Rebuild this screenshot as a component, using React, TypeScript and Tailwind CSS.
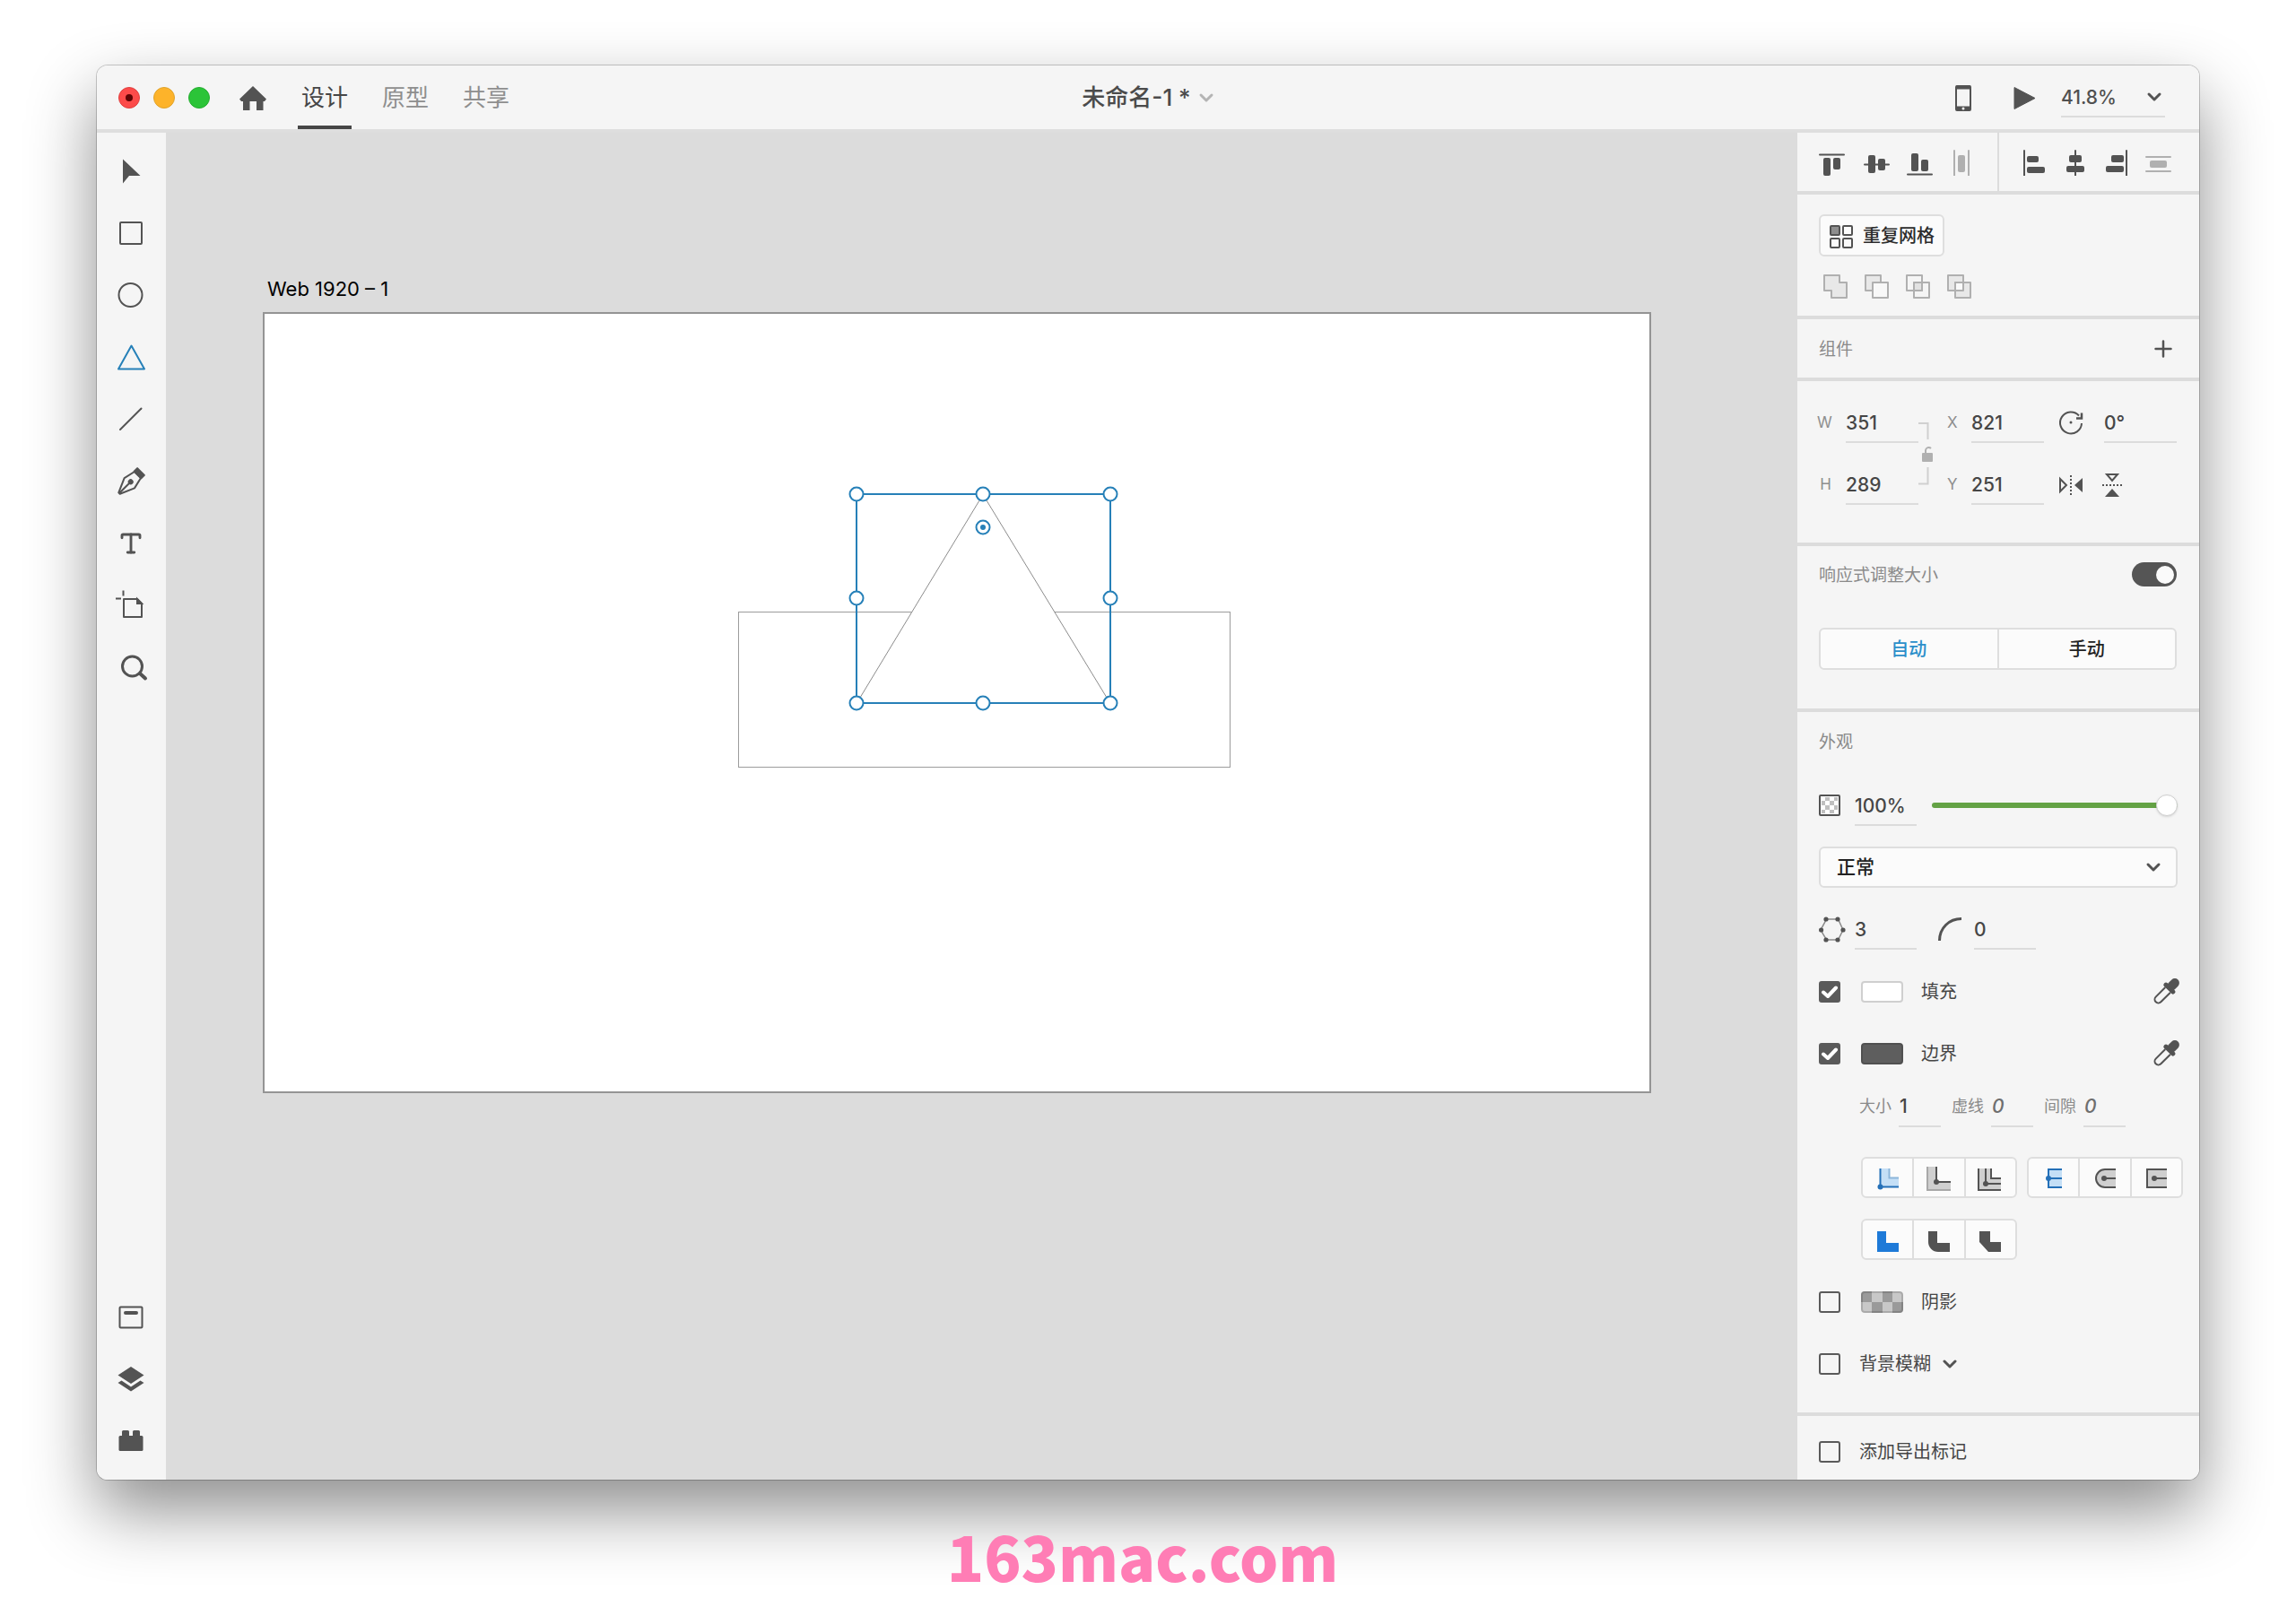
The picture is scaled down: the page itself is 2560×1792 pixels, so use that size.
import React from 'react';
import { Type } from 'lucide-react';

const DARK = '#535353';
const LIGHT = '#b0b0b0';
const BLUE = '#2680b8';

interface GlyphProps {
  size?: number;
  children: React.ReactNode;
}

// All glyphs are drawn around a 0,0 centre
const Glyph: React.FC<GlyphProps> = ({ size = 40, children }) => (
  <svg
    width={size}
    height={size}
    viewBox={`${-size / 2} ${-size / 2} ${size} ${size}`}
    fill="none"
    stroke={DARK}
    strokeWidth="2"
    className="shrink-0"
    aria-hidden="true"
  >
    {children}
  </svg>
);

const Chevron: React.FC<{ color?: string }> = ({ color = DARK }) => (
  <svg width="18" height="12" viewBox="0 0 18 12" fill="none" stroke={color} strokeWidth="3" strokeLinecap="round" strokeLinejoin="round" className="shrink-0" aria-hidden="true">
    <path d="M3 3l6 6 6-6" />
  </svg>
);

const Eyedropper = () => (
  <Glyph size={32}>
    <g transform="rotate(45)">
      <path d="M-4-3V12a4 4 0 0 0 8 0V-3" />
      <rect x="-4" y="-18" width="8" height="13" rx="4" fill={DARK} />
      <rect x="-7" y="-7" width="14" height="3" rx="1" fill={DARK} />
    </g>
  </Glyph>
);

const tools = [
  { name: '选择', icon: <path d="M-9-13.500V13.500L-2 5H10.500Z" fill={DARK} stroke="none" /> },
  { name: '矩形', icon: <rect x="-12" y="-12" width="24" height="24" rx="1" /> },
  { name: '椭圆', icon: <circle cx="-0.500" cy="0" r="13" /> },
  { name: '多边形', icon: <path d="M.5-12.500L15 13.500H-14Z" stroke={BLUE} strokeLinejoin="round" /> },
  { name: '直线', icon: <path d="M-12 12L11.500-11.500" strokeLinecap="round" /> },
  {
    name: '钢笔',
    icon: (
      <g transform="translate(-1 2) rotate(45)" strokeLinejoin="round">
        <rect x="-5.500" y="-17" width="11" height="5" fill={DARK} />
        <path d="M-5-12L-8 1L-1 17H1L8 1L5-12Z" />
        <circle cx="0" cy="-1" r="2" fill={DARK} />
        <path d="M0 0V17" />
      </g>
    ),
  },
  { name: '文本', icon: <Type x={-15} y={-14} size={30} color={DARK} strokeWidth={2.3} /> },
  {
    name: '画板',
    icon: (
      <>
        <path d="M-8-6H7L12-1V14H-8Z" strokeLinejoin="round" />
        <path d="M7-6V-1H12Z" fill={DARK} />
        <path d="M-8.500-15.500V-9.500M-17-6.500H-11" />
      </>
    ),
  },
  {
    name: '缩放',
    icon: (
      <>
        <circle cx="1.500" cy="0" r="11" strokeWidth="3" />
        <path d="M10 8L16 13.500" strokeWidth="4" strokeLinecap="round" />
      </>
    ),
  },
];

const panels = [
  {
    name: '库',
    icon: (
      <>
        <rect x="-12.500" y="-11.500" width="25" height="23" rx="1" />
        <path d="M-6-5H6" strokeWidth="4" strokeLinecap="round" />
      </>
    ),
  },
  {
    name: '图层',
    icon: (
      <g fill={DARK} stroke="none">
        <path d="M0-14L14.500-4.500L0 5L-14.500-4.500Z" />
        <path d="M-14.500 4L-10.500 1.500L0 8.500L10.500 1.500L14.500 4L0 13.500Z" />
      </g>
    ),
  },
  {
    name: '插件',
    icon: (
      <g fill={DARK} stroke="none">
        <rect x="-13.500" y="-6" width="27" height="17" rx="1.500" />
        <rect x="-10" y="-12" width="8" height="10" rx="1.500" />
        <rect x="2" y="-12" width="8" height="10" rx="1.500" />
      </g>
    ),
  },
];

const verticalAlign = [
  { name: '顶对齐', d: 'M-14-8.500H13', bars: [[-10, -5, 8, 20], [1, -5, 8, 13]] },
  { name: '垂直居中', d: 'M-13 2.500H14', bars: [[-9, -8, 8, 20], [2, -4, 8, 13]] },
  { name: '底对齐', d: 'M-14 13.500H13', bars: [[-10, -10, 8, 20], [1, -3, 8, 13]] },
  { name: '水平分布', off: true, d: 'M-11-13V15M5-13V15', bars: [[-7, -8, 8, 19]] },
];

const horizontalAlign = [
  { name: '左对齐', d: 'M-11-13V15', bars: [[-8, -7, 13, 7], [-8, 5, 20, 7]] },
  { name: '水平居中', d: 'M0-13V15', bars: [[-7, -8, 14, 8], [-10, 4, 20, 7]] },
  { name: '右对齐', d: 'M11-13V15', bars: [[-6, -8, 14, 8], [-12, 4, 20, 7]] },
  { name: '垂直分布', off: true, d: 'M-13-6H14M-13 10H14', bars: [[-9, -2, 19, 8]] },
];

const AlignButtons: React.FC<{ items: typeof verticalAlign; className: string }> = ({ items, className }) => (
  <div className={`flex flex-1 items-center pl-6 ${className}`}>
    {items.map((item) => (
      <button key={item.name} aria-label={item.name}>
        <Glyph size={30}>
          <g stroke={item.off ? LIGHT : DARK}>
            <path d={item.d} strokeLinecap="round" />
            {item.bars.map(([x, y, w, h]) => (
              <rect key={`${x},${y}`} x={x} y={y} width={w} height={h} rx="2" fill={item.off ? LIGHT : DARK} stroke="none" />
            ))}
          </g>
        </Glyph>
      </button>
    ))}
  </div>
);

const booleans = [
  { name: '添加', icon: <path d="M-12-12H5V-4H13V13H-4V5H-12Z" fill="#e8e8e8" /> },
  {
    name: '减去',
    icon: (
      <>
        <path d="M-12-12H5V5H-12Z" fill="#e8e8e8" />
        <path d="M-4-4H13V13H-4Z" fill="#f8f8f8" />
      </>
    ),
  },
  {
    name: '交叉',
    icon: (
      <>
        <path d="M-12-12H5V5H-12ZM-4-4H13V13H-4Z" />
        <path d="M-4-4H5V5H-4Z" fill="#e2e2e2" />
      </>
    ),
  },
  {
    name: '排除重叠',
    icon: (
      <>
        <path d="M-12-12H5V5H-12Z" fill="#e8e8e8" />
        <path d="M-4-4H13V13H-4Z" fill="#e8e8e8" />
        <path d="M-4-4H5V5H-4Z" fill="#fafafa" />
      </>
    ),
  },
];

const strokeAlign = [
  {
    name: '内部描边',
    icon: (
      <>
        <path d="M-9-10H1.500V.5H12V11H-9Z" fill="#c4dff6" stroke="none" />
        <path d="M1.500-10V.5H12" stroke="#8cb6da" />
        <path d="M-8.500-10V10.500H12" stroke="#2470b8" />
        <circle cx="-8.500" cy="10.500" r="3" fill="#2470b8" stroke="none" />
      </>
    ),
  },
  {
    name: '外部描边',
    icon: (
      <>
        <path d="M-13-12H-3V5H13V14H-13Z" fill="#cfcfcf" stroke="none" />
        <path d="M-13-12V14H13" stroke="#a8a8a8" />
        <path d="M-3-12V5H13" />
        <circle cx="-3" cy="5" r="3" fill={DARK} stroke="none" />
      </>
    ),
  },
  {
    name: '中心描边',
    icon: (
      <>
        <path d="M-13-10H1V1H12V14H-13Z" fill="#cfcfcf" stroke="none" />
        <path d="M-13-10V14H12M-5-10V7H12M1-10V1H12" />
        <circle cx="-5" cy="7" r="3" fill={DARK} stroke="none" />
      </>
    ),
  },
];

const strokeCaps = [
  {
    name: '对接端头',
    icon: (
      <>
        <path d="M9-9H-6V11H9" fill="#c4dff6" stroke="#2470b8" />
        <path d="M-6 1H9" stroke="#2470b8" />
        <circle cx="-6" cy="1" r="3" fill="#2470b8" stroke="none" />
      </>
    ),
  },
  {
    name: '圆头端头',
    icon: (
      <>
        <path d="M12-9H0A10 10 0 0 0 0 11H12" fill="#cfcfcf" />
        <path d="M-1 1H12" />
        <circle cx="-1" cy="1" r="3" fill={DARK} stroke="none" />
      </>
    ),
  },
  {
    name: '方头端头',
    icon: (
      <>
        <path d="M12-9H-10V11H12" fill="#cfcfcf" />
        <path d="M-2 1H12" />
        <circle cx="-2" cy="1" r="3" fill={DARK} stroke="none" />
      </>
    ),
  },
];

const strokeJoins = [
  { name: '斜接连接', icon: <path d="M-12-9H-2V4H12V14H-12Z" fill="#1e7ad8" stroke="none" /> },
  { name: '圆角连接', icon: <path d="M-12-9H-2V4H12V14H-1A11 11 0 0 1-12 3Z" fill={DARK} stroke="none" /> },
  { name: '斜面连接', icon: <path d="M-12-9H0V3H12V14H-2L-12 3Z" fill={DARK} stroke="none" /> },
];

const IconGroup: React.FC<{ items: typeof strokeJoins }> = ({ items }) => (
  <div className="flex h-[46px] w-[174px] divide-x-2 divide-[#dedede] rounded-md border-2 border-[#dedede] bg-[#fbfbfb]">
    {items.map((item, i) => (
      <button key={item.name} aria-label={item.name} aria-pressed={i === 0} className="flex flex-1 items-center justify-center">
        <Glyph size={32}>{item.icon}</Glyph>
      </button>
    ))}
  </div>
);

interface FieldProps {
  label: string;
  value: string;
  className: string;
}

const Field: React.FC<FieldProps> = ({ label, value, className }) => (
  <input
    aria-label={label}
    defaultValue={value}
    className={`h-[46px] border-b-2 border-[#dcdcdc] bg-transparent pt-[3px] text-[21px] font-medium outline-none ${className}`}
  />
);

const StrokeField: React.FC<FieldProps> = ({ label, value, className }) => (
  <label className="flex items-center gap-2 text-lg text-[#8a8a8a]">
    {label}
    <input
      defaultValue={value}
      className={`h-[46px] w-[47px] border-b-2 border-[#dcdcdc] bg-transparent px-px text-[21px] font-medium outline-none ${className}`}
    />
  </label>
);

const Checkbox: React.FC<{ id: string; checked?: boolean }> = ({ id, checked }) => (
  <span className="grid size-6 shrink-0">
    <input
      id={id}
      type="checkbox"
      defaultChecked={checked}
      className="peer col-start-1 row-start-1 size-6 appearance-none rounded-[3px] border-2 border-[#5a5a5a] checked:bg-[#5a5a5a]"
    />
    <svg viewBox="0 0 24 24" fill="none" stroke="#fff" strokeWidth="4" strokeLinecap="round" strokeLinejoin="round" className="pointer-events-none invisible col-start-1 row-start-1 size-6 peer-checked:visible" aria-hidden="true">
      <path d="M5 12.500L10 17L19 7.500" />
    </svg>
  </span>
);

const Header = () => (
  <header className="grid h-[75px] grid-cols-[1fr_auto_1fr] border-b-4 border-[#dedede]">
    <div className="flex items-center pl-6">
      <div className="flex gap-[15px]">
        <button aria-label="关闭" className="flex size-6 items-center justify-center rounded-full border border-[#e0403f] bg-[#fc4b4a]">
          <span className="size-2 rounded-full bg-[#5f0505]" />
        </button>
        <button aria-label="最小化" className="size-6 rounded-full border border-[#e0a32a] bg-[#fdb32a]" />
        <button aria-label="全屏" className="size-6 rounded-full border border-[#25ad30] bg-[#2bc438]" />
      </div>
      <button aria-label="主页" className="ml-7">
        <Glyph>
          <path d="M0-13L15 1.500L13 4H11.500V14H4V4H-3.500V14H-11V4H-13L-15 1.500Z" fill={DARK} stroke="none" />
        </Glyph>
      </button>
      <nav className="ml-[30px] flex gap-[30px] self-stretch text-[26px] text-[#8e8e8e]">
        <button className="border-b-4 border-[#464646] px-1 pt-1 text-[#464646]">设计</button>
        <button className="border-b-4 border-transparent px-1 pt-1">原型</button>
        <button className="border-b-4 border-transparent px-1 pt-1">共享</button>
      </nav>
    </div>
    <button className="flex items-center gap-2 text-[26px] font-medium text-[#4b4b4b]">
      未命名-1 *
      <Chevron color="#b4b4b4" />
    </button>
    <div className="flex items-center justify-end pr-[38px]">
      <button aria-label="在设备上预览">
        <Glyph>
          <rect x="-8" y="-13" width="16" height="27" rx="1" />
          <path d="M-8-11.500H8M-8 11.500H8" strokeWidth="4" />
          <circle cx="0" cy="12" r="1.500" fill="#f5f5f5" stroke="none" />
        </Glyph>
      </button>
      <button aria-label="桌面预览" className="ml-[28px]">
        <Glyph>
          <path d="M-11-11.500L12 .5L-11 12.500Z" fill={DARK} strokeWidth="1" strokeLinejoin="round" />
        </Glyph>
      </button>
      <div className="ml-[21px] grid w-[116px] items-center border-b-2 border-[#dcdcdc]">
        <select aria-label="缩放" className="col-start-1 row-start-1 h-[43px] appearance-none pt-[3px] text-[21px] font-medium text-[#505050] outline-none">
          <option>41.8%</option>
        </select>
        <span className="pointer-events-none col-start-1 row-start-1 mr-[3px] justify-self-end">
          <Chevron />
        </span>
      </div>
    </div>
  </header>
);

const Toolbar = () => (
  <aside className="flex w-[77px] flex-col justify-between pt-2 pr-[2px] pb-[9px]">
    <div className="flex flex-col">
      {tools.map((tool) => (
        <button key={tool.name} aria-label={tool.name} className="flex h-[69px] items-center justify-center">
          <Glyph>{tool.icon}</Glyph>
        </button>
      ))}
    </div>
    <div className="flex flex-col">
      {panels.map((panel) => (
        <button key={panel.name} aria-label={panel.name} className="flex h-[69px] items-center justify-center">
          <Glyph>{panel.icon}</Glyph>
        </button>
      ))}
    </div>
  </aside>
);

const handles = [
  [662, 203], [803, 203], [945, 203],
  [662, 319], [945, 319],
  [662, 436], [803, 436], [945, 436],
];

const Canvas = () => (
  <main className="min-w-0 flex-1 bg-[#dcdcdc] pt-[160px] pr-[163px] pl-[108px]">
    <p className="pl-[5px] text-[22px] leading-7 text-black">Web 1920 – 1</p>
    <svg viewBox="0 0 1548 871" fill="#fff" className="mt-3 block w-full" role="img" aria-label="Web 1920 – 1">
      <rect x="1" y="1" width="1546" height="869" stroke="#949494" strokeWidth="2" />
      <rect x="530.500" y="334.500" width="548" height="173" stroke="#9c9c9c" />
      <path d="M803 203.500L945 436.500H662Z" stroke="#8c8c8c" />
      <g stroke={BLUE} strokeWidth="2">
        <rect x="662" y="203" width="283" height="233" fill="none" />
        {handles.map(([x, y]) => (
          <circle key={`${x}-${y}`} cx={x} cy={y} r="7.500" />
        ))}
        <circle cx="803" cy="240" r="7.500" />
        <circle cx="803" cy="240" r="3" fill={BLUE} stroke="none" />
      </g>
    </svg>
  </main>
);

const SectionTitle: React.FC<{ children: React.ReactNode }> = ({ children }) => (
  <h2 className="pt-[3px] text-[19px] text-[#8a8a8a]">{children}</h2>
);

const Transform = () => (
  <section className="grid grid-cols-[32px_81px_16px_43px_81px_67px_81px] items-center gap-y-[23px] border-b-4 border-[#dcdcdc] pt-[23px] pb-[42px] pl-[22px] text-[17px] text-[#8e8e8e]">
    <span className="pt-[2px] pr-4 text-right">W</span>
    <Field label="宽度" value="351" className="w-full text-[#464646]" />
    <svg width="16" height="115" viewBox="0 0 16 115" fill="none" stroke="#d0d0d0" strokeWidth="2" className="row-span-2" aria-hidden="true">
      <path d="M0 24H10.500V42M10.500 73V91.500H0" />
      <path d="M8 58V54a3.500 3.500 0 0 1 6-2" stroke={LIGHT} />
      <rect x="4" y="57" width="12" height="10" rx="1" fill={LIGHT} stroke="none" />
    </svg>
    <span className="pt-[2px] pl-4">X</span>
    <Field label="X 坐标" value="821" className="w-full text-[#464646]" />
    <span className="pl-[14px]">
      <Glyph size={32}>
        <path d="M12 1A12 12 0 1 1 9-7.500" />
        <path d="M12-10.500V-4.500H6" strokeWidth="2.500" />
        <circle cx="0" cy="0" r="1.500" fill={DARK} stroke="none" />
      </Glyph>
    </span>
    <Field label="旋转" value="0°" className="w-full text-[#464646]" />
    <span className="pt-[2px] pr-4 text-right">H</span>
    <Field label="高度" value="289" className="w-full text-[#464646]" />
    <span className="pt-[2px] pl-4">Y</span>
    <Field label="Y 坐标" value="251" className="w-full text-[#464646]" />
    <button aria-label="水平翻转" className="pl-[14px]">
      <Glyph size={32}>
        <path d="M-12-6L-5 1L-12 8Z" />
        <path d="M13-7V9L4 1Z" fill={DARK} stroke="none" />
        <path d="M0-10V12" strokeDasharray="2 2" />
      </Glyph>
    </button>
    <button aria-label="垂直翻转" className="-ml-[7px]">
      <Glyph size={32}>
        <path d="M-6-11H6L0-4Z" />
        <path d="M-8 14H8L0 5Z" fill={DARK} stroke="none" />
        <path d="M-11 1H11" strokeDasharray="2 2" />
      </Glyph>
    </button>
  </section>
);

const Appearance = () => (
  <section className="border-b-4 border-[#dcdcdc] pr-6 pb-8 pl-6">
    <div className="mb-[15px] flex h-[66px] items-center">
      <SectionTitle>外观</SectionTitle>
    </div>
    <div className="flex flex-col gap-[23px] text-[#464646]">
      <div className="flex items-center">
        <svg width="24" height="24" viewBox="0 0 24 24" aria-hidden="true">
          <rect x="1" y="1" width="22" height="22" rx="1" fill="#fff" stroke={DARK} strokeWidth="2" />
          <path d="M7 3h5v4h-5zM17 3h4v4h-4zM3 7h4v5h-4zM12 7h5v5h-5zM7 12h5v5h-5zM17 12h4v5h-4zM3 17h4v4h-4zM12 17h5v4h-5z" fill="#c0c0c0" />
        </svg>
        <Field label="不透明度" value="100%" className="ml-4 w-[69px]" />
        <input
          type="range"
          aria-label="不透明度滑块"
          defaultValue={100}
          className="ml-[17px] h-6 min-w-0 flex-1 appearance-none bg-transparent [&::-webkit-slider-runnable-track]:h-[6px] [&::-webkit-slider-runnable-track]:rounded-full [&::-webkit-slider-runnable-track]:bg-[#64a245] [&::-webkit-slider-thumb]:-mt-[9px] [&::-webkit-slider-thumb]:size-6 [&::-webkit-slider-thumb]:appearance-none [&::-webkit-slider-thumb]:rounded-full [&::-webkit-slider-thumb]:border [&::-webkit-slider-thumb]:border-[#cfcfcf] [&::-webkit-slider-thumb]:bg-white [&::-webkit-slider-thumb]:shadow-sm"
        />
      </div>
      <div className="grid h-[46px] items-center rounded-md border-2 border-[#dedede] bg-[#fbfbfb]">
        <select aria-label="混合模式" className="col-start-1 row-start-1 h-full appearance-none pl-[18px] text-[21px] font-medium text-[#222] outline-none">
          <option>正常</option>
        </select>
        <span className="pointer-events-none col-start-1 row-start-1 mr-4 justify-self-end">
          <Chevron />
        </span>
      </div>
      <div className="flex items-center">
        <Glyph size={30}>
          <path d="M-6.500-11H6.500L12 1L6.500 12H-6.500L-13 1Z" stroke="#8a8a8a" strokeWidth="1.500" />
          <g fill={DARK} stroke="none">
            <circle cx="-7" cy="-11" r="2.600" />
            <circle cx="6" cy="-11" r="2.600" />
            <circle cx="12" cy="1" r="2.600" />
            <circle cx="6" cy="12" r="2.600" />
            <circle cx="-7" cy="12" r="2.600" />
            <circle cx="-12.400" cy="1" r="2.600" />
          </g>
        </Glyph>
        <Field label="角计数" value="3" className="ml-[10px] w-[69px]" />
        <span className="ml-[22px]">
          <Glyph size={32}>
            <path d="M-12.500 13C-12.500-1-2-11.500 12-11.500" strokeWidth="3" />
          </Glyph>
        </span>
        <Field label="圆角半径" value="0" className="ml-[10px] w-[69px]" />
      </div>
      <div className="flex h-[46px] items-center pt-[2px] text-[20px]">
        <Checkbox id="fill" checked />
        <button aria-label="填充颜色" className="ml-[23px] h-6 w-[47px] rounded border-2 border-[#cfcfcf] bg-white" />
        <label htmlFor="fill" className="ml-5">填充</label>
        <button aria-label="拾取填充颜色" className="-mr-[3px] ml-auto">
          <Eyedropper />
        </button>
      </div>
      <div className="pb-[10px]">
        <div className="mb-[14px] flex h-[46px] items-center pt-[2px] text-[20px]">
          <Checkbox id="border" checked />
          <button aria-label="边界颜色" className="ml-[23px] h-6 w-[47px] rounded border-2 border-[#505050] bg-[#5e5e5e]" />
          <label htmlFor="border" className="ml-5">边界</label>
          <button aria-label="拾取边界颜色" className="-mr-[3px] ml-auto">
            <Eyedropper />
          </button>
        </div>
        <div className="flex gap-3 pl-[45px]">
          <StrokeField label="大小" value="1" className="text-[#464646]" />
          <StrokeField label="虚线" value="0" className="text-[#6e6e6e] italic" />
          <StrokeField label="间隙" value="0" className="text-[#6e6e6e] italic" />
        </div>
      </div>
      <div className="-mr-[10px] flex gap-[11px] pl-[47px]">
        <IconGroup items={strokeAlign} />
        <IconGroup items={strokeCaps} />
      </div>
      <div className="flex pl-[47px]">
        <IconGroup items={strokeJoins} />
      </div>
      <div className="flex h-[46px] items-center pt-[2px] text-[20px]">
        <Checkbox id="shadow" />
        <button aria-label="阴影颜色" className="ml-[23px] overflow-hidden rounded">
          <svg width="47" height="24" viewBox="0 0 47 24" aria-hidden="true">
            <path d="M0 0H47V24H0Z" fill="#c8c8c8" />
            <path d="M0 0H12V12H0ZM24 0H35V12H24ZM12 12H24V24H12ZM35 12H47V24H35Z" fill="#9a9a9a" />
            <rect x="1" y="1" width="45" height="22" rx="3" fill="none" stroke="#000" strokeOpacity=".15" strokeWidth="2" />
          </svg>
        </button>
        <label htmlFor="shadow" className="ml-5">阴影</label>
      </div>
      <div className="flex h-[46px] items-center pt-[2px] text-[20px]">
        <Checkbox id="blur" />
        <label htmlFor="blur" className="ml-[21px]">背景模糊</label>
        <button aria-label="模糊类型" className="ml-3">
          <Chevron />
        </button>
      </div>
    </div>
  </section>
);

const Inspector = () => (
  <aside className="w-[448px] shrink-0">
    <section className="flex h-[69px] divide-x-2 divide-[#dcdcdc] border-b-4 border-[#dcdcdc]">
      <AlignButtons items={verticalAlign} className="gap-[19px]" />
      <AlignButtons items={horizontalAlign} className="gap-4" />
    </section>

    <section className="border-b-4 border-[#dcdcdc] px-6 pt-[22px] pb-[18px]">
      <button className="flex h-[47px] items-center gap-[10px] rounded-md border-2 border-[#dedede] bg-[#fbfbfb] px-[9px] text-[20px] font-medium text-[#2c2c2c]">
        <Glyph size={28}>
          <rect x="-12" y="-11" width="10" height="10" rx="1" fill="#8e8e8e" />
          <rect x="2" y="-11" width="10" height="10" rx="1" />
          <rect x="-12" y="3" width="10" height="10" rx="1" />
          <rect x="2" y="3" width="10" height="10" rx="1" />
        </Glyph>
        重复网格
      </button>
      <div className="mt-[18px] flex gap-4 pl-[3px]">
        {booleans.map((item) => (
          <button key={item.name} aria-label={item.name}>
            <Glyph size={30}>
              <g stroke={LIGHT} strokeLinejoin="round">{item.icon}</g>
            </Glyph>
          </button>
        ))}
      </div>
    </section>

    <section className="flex h-[69px] items-center justify-between border-b-4 border-[#dcdcdc] pr-[30px] pl-6">
      <SectionTitle>组件</SectionTitle>
      <button aria-label="制作组件">
        <Glyph size={20}>
          <path d="M-8.500 0H8.500M0-8.500V8.500" strokeWidth="2.500" strokeLinecap="round" />
        </Glyph>
      </button>
    </section>

    <Transform />

    <section className="border-b-4 border-[#dcdcdc] pt-[18px] pr-[25px] pb-[43px] pl-6">
      <div className="flex h-[27px] items-center justify-between">
        <SectionTitle>响应式调整大小</SectionTitle>
        <input
          type="checkbox"
          role="switch"
          aria-label="响应式调整大小"
          defaultChecked
          className="flex h-[27px] w-[50px] appearance-none items-center justify-end rounded-full bg-[#555] pr-[3px] before:size-5 before:rounded-full before:bg-[#fafafa]"
        />
      </div>
      <div className="mt-[46px] flex h-[47px] divide-x-2 divide-[#dedede] rounded-md border-2 border-[#dedede] bg-[#fbfbfb] text-[20px] font-medium">
        <button aria-pressed="true" className="flex-1 text-[#2b8fca]">自动</button>
        <button aria-pressed="false" className="flex-1 text-[#222]">手动</button>
      </div>
    </section>

    <Appearance />

    <section className="flex h-[71px] items-center pt-2 pl-6 text-[20px] text-[#464646]">
      <Checkbox id="export" />
      <label htmlFor="export" className="ml-[21px]">添加导出标记</label>
    </section>
  </aside>
);

const App = () => {
  return (
    <div lang="zh-CN" className="min-h-screen overflow-hidden bg-white px-[108px] pt-[73px] font-['Inter','Noto_Sans_CJK_SC',sans-serif]">
      <div className="rounded-xl shadow-[0_0_0_1px_rgba(0,0,0,0.2),0_34px_76px_rgba(0,0,0,0.45)]">
        <div className="overflow-hidden rounded-xl bg-[#f5f5f5]">
          <Header />
          <div className="flex">
            <Toolbar />
            <Canvas />
            <Inspector />
          </div>
        </div>
      </div>
      <footer className="mt-[45px] pr-3 text-center font-['Noto_Sans_CJK_SC',sans-serif] text-[68px] leading-[80px] font-black text-[#ff7db5]">
        163mac.com
      </footer>
    </div>
  );
};

export default App;
